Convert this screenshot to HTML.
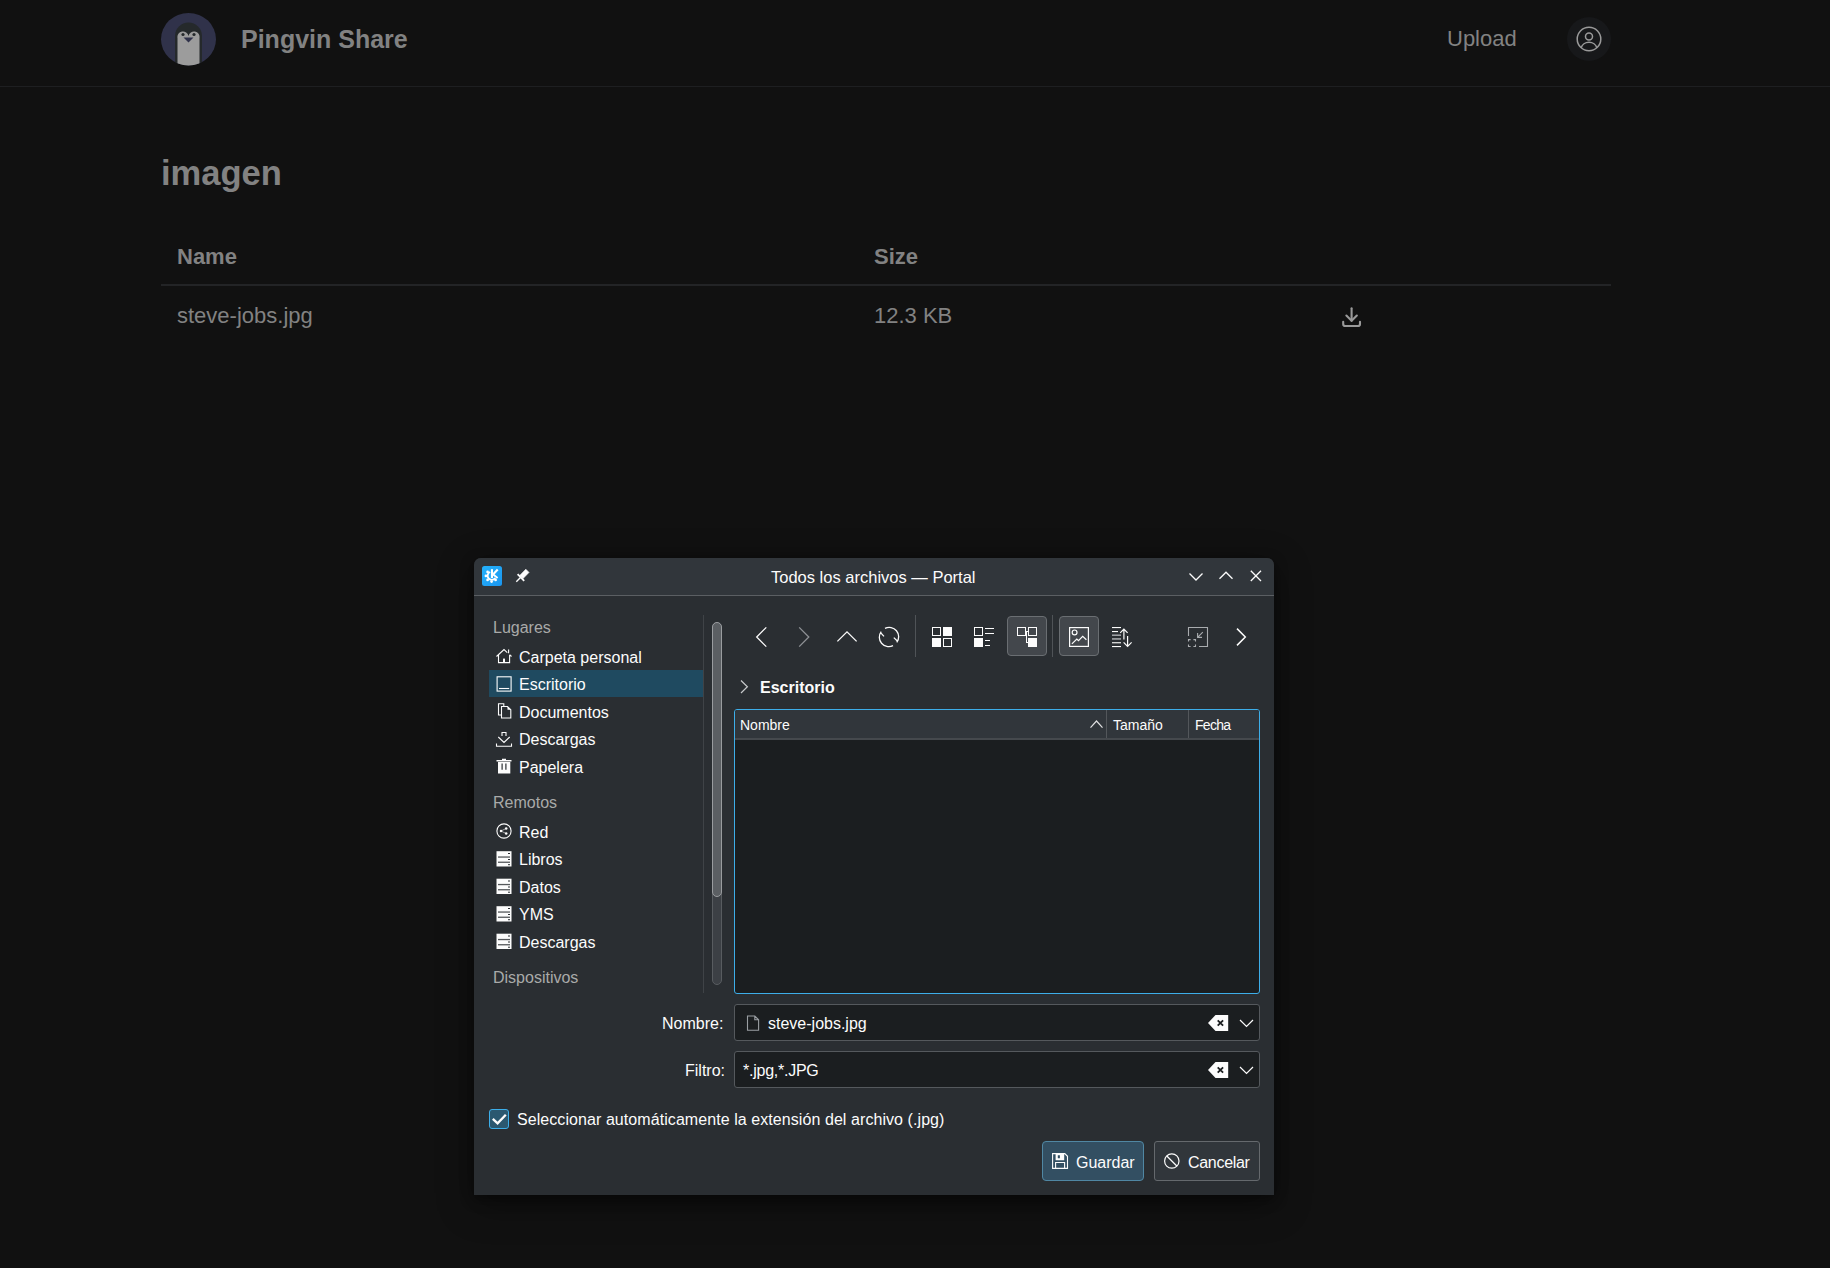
<!DOCTYPE html>
<html><head><meta charset="utf-8">
<style>
*{margin:0;padding:0;box-sizing:border-box}
html,body{width:1830px;height:1268px;overflow:hidden;background:#111111;font-family:"Liberation Sans",sans-serif}
.a{position:absolute;white-space:nowrap}
#hdrline{position:absolute;left:0;top:86px;width:1830px;height:1px;background:#1e1f21}
.web{color:#828282}
/* dialog */
#dlg{position:absolute;left:474px;top:558px;width:800px;height:637px;background:#2a2e32;border-radius:6px 6px 0 0;overflow:hidden;color:#fcfcfc}
#title{position:absolute;left:0;top:0;width:800px;height:37px;background:#31363b;border-bottom:1px solid #4f5459}
.d{position:absolute;white-space:nowrap;font-size:16px;color:#fcfcfc}
.sec{color:#a9aaa9}
svg{position:absolute;overflow:visible}
</style></head>
<body>
<!-- header -->
<svg style="left:161px;top:12px" width="56" height="56" viewBox="0 0 56 56">
  <ellipse cx="27.5" cy="27.2" rx="27.5" ry="26.3" fill="#30324a"/>
  <clipPath id="cc"><ellipse cx="27.5" cy="27.2" rx="27.5" ry="26.3"/></clipPath>
  <g clip-path="url(#cc)">
    <path d="M14 60 V24 A13.5 13.5 0 0 1 41 24 V60 Z" fill="#25292b"/>
    <path d="M16.5 60 V26 A5 5 0 0 1 27.5 24 A5 5 0 0 1 38.5 26 V60 Z" fill="#9c9c9c"/>
    <circle cx="22" cy="22.5" r="1.6" fill="#25292b"/>
    <circle cx="33" cy="22.5" r="1.6" fill="#25292b"/>
    <path d="M22.5 25.5 H32.5 L27.5 30.5 Z" fill="#30324a"/>
  </g>
</svg>
<div class="a web" style="left:241px;top:23px;font-size:25px;font-weight:bold;line-height:32px">Pingvin Share</div>
<div class="a web" style="left:1447px;top:25px;font-size:22px;line-height:28px">Upload</div>
<div class="a" style="left:1567px;top:17px;width:44px;height:44px;border-radius:50%;background:#17181a"></div>
<svg style="left:1569px;top:19px" width="40" height="40" viewBox="0 0 40 40" fill="none" stroke="#9a9a9a" stroke-width="1.5">
  <circle cx="20" cy="20" r="11.8"/>
  <circle cx="20" cy="17.6" r="3.5"/>
  <path d="M12.2 28.8 A8 7.2 0 0 1 27.8 28.8"/>
</svg>
<div id="hdrline"></div>
<div class="a web" style="left:161px;top:153px;font-size:34.5px;font-weight:bold;line-height:40px">imagen</div>
<div class="a web" style="left:177px;top:244px;font-size:22px;font-weight:bold;line-height:26px">Name</div>
<div class="a web" style="left:874px;top:244px;font-size:22px;font-weight:bold;line-height:26px">Size</div>
<div class="a" style="left:161px;top:284px;width:1450px;height:2px;background:#232426"></div>
<div class="a web" style="left:177px;top:303px;font-size:22px;line-height:26px">steve-jobs.jpg</div>
<div class="a web" style="left:874px;top:303px;font-size:22px;line-height:26px">12.3 KB</div>
<svg style="left:1339px;top:304px" width="25.2" height="25.2" viewBox="0 0 24 24" fill="none" stroke="#9a9a9a" stroke-width="2" stroke-linecap="round" stroke-linejoin="round">
  <path d="M4 17v2a2 2 0 0 0 2 2h12a2 2 0 0 0 2 -2v-2"/><path d="M7 11l5 5l5 -5"/><path d="M12 4l0 12"/>
</svg>

<!-- dialog -->
<div class="a" style="left:474px;top:558px;width:800px;height:637px;background:#2a2e32;border-radius:7px 7px 0 0;overflow:hidden;box-shadow:0 4px 14px rgba(0,0,0,0.45),0 10px 36px rgba(0,0,0,0.35)">
  <div class="a" style="left:0;top:0;width:800px;height:37px;background:#31363b"></div>
  <div class="a" style="left:0;top:37px;width:800px;height:1px;background:#5b5f63"></div>
</div>
<!-- title -->
<div class="d" style="left:771px;top:569px;font-size:16.5px;line-height:16.5px">Todos los archivos — Portal</div>
<!-- places -->
<div class="a" style="left:489px;top:670px;width:214px;height:27px;background:#1f4a60"></div>
<div class="d sec" style="left:493px;top:620px;line-height:16px">Lugares</div>
<div class="d" style="left:519px;top:650px;line-height:16px">Carpeta personal</div>
<div class="d" style="left:519px;top:677px;line-height:16px">Escritorio</div>
<div class="d" style="left:519px;top:705px;line-height:16px">Documentos</div>
<div class="d" style="left:519px;top:732px;line-height:16px">Descargas</div>
<div class="d" style="left:519px;top:760px;line-height:16px">Papelera</div>
<div class="d sec" style="left:493px;top:795px;line-height:16px">Remotos</div>
<div class="d" style="left:519px;top:825px;line-height:16px">Red</div>
<div class="d" style="left:519px;top:852px;line-height:16px">Libros</div>
<div class="d" style="left:519px;top:880px;line-height:16px">Datos</div>
<div class="d" style="left:519px;top:907px;line-height:16px">YMS</div>
<div class="d" style="left:519px;top:935px;line-height:16px">Descargas</div>
<div class="d sec" style="left:493px;top:970px;line-height:16px">Dispositivos</div>
<div class="a" style="left:703px;top:615px;width:1px;height:378px;background:#3f4347"></div>
<!-- scrollbar -->
<div class="a" style="left:711.5px;top:622px;width:10px;height:363px;border-radius:5px;background:#3c4045;border:1px solid #585c60"></div>
<div class="a" style="left:711.5px;top:622px;width:10px;height:275px;border-radius:5px;background:#5b5f63;border:1px solid #999c9f"></div>
<!-- toolbar buttons -->
<div class="a" style="left:1007px;top:616px;width:40px;height:40px;border-radius:4px;background:#43474c;border:1px solid #6a6e72"></div>
<div class="a" style="left:1059px;top:616px;width:40px;height:40px;border-radius:4px;background:#43474c;border:1px solid #6a6e72"></div>
<div class="a" style="left:915px;top:615px;width:1px;height:42px;background:#4f5357"></div>
<div class="a" style="left:1052px;top:615px;width:1px;height:42px;background:#4f5357"></div>
<!-- breadcrumb -->
<div class="d" style="left:760px;top:680px;line-height:16px;font-weight:bold">Escritorio</div>
<!-- view -->
<div class="a" style="left:734px;top:709px;width:526px;height:285px;border:1px solid #3daee9;border-radius:3px;background:#1b1e20;overflow:hidden">
  <div class="a" style="left:0;top:0;width:524px;height:30px;background:#31363b;border-bottom:2px solid #45494d"></div>
  <div class="a" style="left:371px;top:0;width:1px;height:28px;background:#53575b"></div>
  <div class="a" style="left:453px;top:0;width:1px;height:28px;background:#53575b"></div>
</div>
<div class="d" style="left:740px;top:718px;font-size:14px;line-height:14px">Nombre</div>
<div class="d" style="left:1113px;top:718px;font-size:14px;line-height:14px">Tamaño</div>
<div class="d" style="left:1195px;top:718px;font-size:14px;line-height:14px;letter-spacing:-0.7px">Fecha</div>
<!-- fields -->
<div class="d" style="left:662px;top:1016px;line-height:16px">Nombre:</div>
<div class="a" style="left:734px;top:1004px;width:526px;height:37px;border:1px solid #55595d;border-radius:3px;background:#1b1e20"></div>
<div class="d" style="left:768px;top:1016px;line-height:16px">steve-jobs.jpg</div>
<div class="d" style="left:685px;top:1063px;line-height:16px">Filtro:</div>
<div class="a" style="left:734px;top:1051px;width:526px;height:37px;border:1px solid #55595d;border-radius:3px;background:#1b1e20"></div>
<div class="d" style="left:743px;top:1063px;line-height:16px;letter-spacing:-0.25px">*.jpg,*.JPG</div>
<!-- checkbox -->
<div class="a" style="left:489px;top:1109px;width:20px;height:20px;border:1px solid #3daee9;border-radius:3px;background:#2b5870"></div>
<div class="d" style="left:517px;top:1112px;line-height:16px;letter-spacing:0.07px">Seleccionar automáticamente la extensión del archivo (.jpg)</div>
<!-- buttons -->
<div class="a" style="left:1042px;top:1141px;width:102px;height:40px;border:1px solid #5087a3;border-radius:4px;background:#334f62"></div>
<div class="d" style="left:1076px;top:1155px;line-height:16px">Guardar</div>
<div class="a" style="left:1154px;top:1141px;width:106px;height:40px;border:1px solid #65696d;border-radius:3px;background:#31363b"></div>
<div class="d" style="left:1188px;top:1155px;line-height:16px;letter-spacing:-0.3px">Cancelar</div>
<!-- icons -->
<svg style="left:0;top:0" width="1830" height="1268" viewBox="0 0 1830 1268">
 <defs>
  <linearGradient id="kg" x1="0" y1="0" x2="1" y2="1"><stop offset="0" stop-color="#24b2fb"/><stop offset="1" stop-color="#1b96f0"/></linearGradient>
 </defs>
 <!-- KDE logo -->
 <rect x="482" y="566" width="20" height="20" rx="2.5" fill="url(#kg)"/>
 <path d="M490.2 572 A4.1 4.1 0 1 0 495.2 578" stroke="#fff" stroke-width="1.8" fill="none"/>
 <g fill="#fff">
  <circle cx="485.9" cy="575.9" r="1.35"/><circle cx="487.6" cy="571.9" r="1.35"/><circle cx="487.6" cy="579.9" r="1.35"/>
  <circle cx="491.6" cy="581.6" r="1.35"/><circle cx="495.6" cy="579.9" r="1.35"/>
  <rect x="490.9" y="569.2" width="2.1" height="8.9"/>
 </g>
 <g stroke="#fff" fill="none">
  <line x1="492.8" y1="574.8" x2="497.7" y2="569.5" stroke-width="2.1"/>
  <line x1="493.2" y1="574.4" x2="497.6" y2="577.9" stroke-width="1.9"/>
 </g>
 <!-- pin -->
 <g fill="#fcfcfc" stroke="#fcfcfc">
  <line x1="516.3" y1="581.8" x2="521" y2="577.1" stroke-width="1.4"/>
  <line x1="517.6" y1="574.2" x2="524.2" y2="580.8" stroke-width="1.8"/>
  <path d="M519.8 575.4 L525.8 569.2 L529 572.4 L523 578.6 Z" stroke-width="0.6"/>
 </g>
 <!-- title buttons -->
 <g fill="none" stroke="#fcfcfc" stroke-width="1.3">
  <path d="M1189.5 573.5 L1196 580 L1202.5 573.5"/>
  <path d="M1219.5 578.7 L1226 572.2 L1232.5 578.7"/>
  <path d="M1250.8 570.8 L1261 581 M1261 570.8 L1250.8 581"/>
 </g>
 <!-- toolbar -->
 <g fill="none" stroke="#fcfcfc" stroke-width="1.3">
  <path d="M766.3 627.4 L756.7 637 L766.3 646.6"/>
  <path d="M837.4 641.4 L847 631.8 L856.6 641.4"/>
  <path d="M885 628.4 A9.4 9.4 0 0 1 896.8 642.4 M893.8 637.6 L897.6 641.2"/>
  <path d="M893 645.6 A9.4 9.4 0 0 1 881.2 631.6 M880.8 632.9 L884 636.4"/>
 </g>
 <path d="M799.2 627.4 L808.8 637 L799.2 646.6" fill="none" stroke="#8e9195" stroke-width="1.3"/>
 <!-- icons view -->
 <g fill="#fcfcfc">
  <path d="M932 627 h9 v9 h-9 Z M933 628 v7 h7 v-7 Z" fill-rule="evenodd"/>
  <rect x="943" y="627" width="9" height="9"/>
  <rect x="932" y="638" width="9" height="9"/>
  <path d="M943 638 h9 v9 h-9 Z M944 639 v7 h7 v-7 Z" fill-rule="evenodd"/>
 <!-- compact -->
  <path d="M974 627 h9 v9 h-9 Z M975 628 v7 h7 v-7 Z" fill-rule="evenodd"/>
  <rect x="974" y="638" width="9" height="9"/>
  <rect x="985" y="628" width="9" height="1"/><rect x="985" y="633" width="9" height="1"/>
  <rect x="985" y="640" width="5" height="1"/><rect x="985" y="645" width="5" height="1"/>
 <!-- tree -->
  <path d="M1017 627 h9 v9 h-9 Z M1018 628 v7 h7 v-7 Z" fill-rule="evenodd"/>
  <path d="M1028 627 h9 v9 h-9 Z M1029 628 v7 h7 v-7 Z" fill-rule="evenodd"/>
  <rect x="1028" y="638" width="9" height="9"/>
  <rect x="1026" y="631" width="2" height="1"/>
  <rect x="1026" y="631" width="1" height="12"/>
  <rect x="1026" y="642" width="2" height="1"/>
 </g>
 <!-- preview -->
 <g fill="none" stroke="#fcfcfc" stroke-width="1.2">
  <rect x="1069.6" y="627.6" width="18.8" height="18.8"/>
  <circle cx="1074.6" cy="632.4" r="2.4"/>
  <path d="M1071.9 643.9 L1076.8 639 L1078.5 640.7 L1082.7 636.3 L1086.4 639.8"/>
 </g>
 <!-- sort -->
 <g fill="#fcfcfc">
  <rect x="1112" y="627" width="9" height="1.1"/>
  <rect x="1112" y="631" width="6" height="1.1"/>
  <rect x="1112" y="634.6" width="9" height="1.1" fill="#d0d2d4"/>
  <rect x="1112" y="638.4" width="9" height="1.1" fill="#d8dadc"/>
  <rect x="1112" y="642.2" width="9" height="1.1"/>
  <rect x="1112" y="646" width="9" height="1.1"/>
 </g>
 <g fill="none" stroke="#fcfcfc" stroke-width="1.2">
  <path d="M1123.9 629.2 V639.5 M1120.2 632.8 L1123.9 629 L1127.6 632.8"/>
  <path d="M1127.6 636 V646.4 M1123.6 642.4 L1127.6 646.4 L1131.6 642.4"/>
 </g>
 <!-- zoom fit (dim) -->
 <g fill="none" stroke="#a9acaf" stroke-width="1.1">
  <path d="M1188.5 636 V627.5 H1207.5 V646.5 H1199"/>
  <path d="M1188.5 641.6 V639.6 H1190.6 M1193.4 639.6 H1195.5 V641.6 M1188.5 644.4 V646.5 H1190.6 M1193.4 646.5 H1195.5 V644.4"/>
  <path d="M1202.8 632.2 L1197.6 637.4 M1197.6 633 V637.4 H1202"/>
 </g>
 <path d="M1237 628.6 L1245.3 637 L1237 645.4" fill="none" stroke="#fcfcfc" stroke-width="1.5"/>
 <!-- breadcrumb > -->
 <path d="M741 680.5 L747.4 686.8 L741 693" fill="none" stroke="#c8cacc" stroke-width="1.2"/>
 <!-- sort caret -->
 <path d="M1090.5 727.6 L1096.5 721 L1102.5 727.6" fill="none" stroke="#e0e1e2" stroke-width="1.2"/>
 <!-- places icons -->
 <g fill="none" stroke="#fcfcfc" stroke-width="1.1">
  <path d="M496.5 656.5 L504 649.5 L507.3 652.6 M509.6 654.6 L511.5 656.5 M498.5 655 V662.6 H509.6 V655 M508.6 649.6 V653.2"/>
  <rect x="497.1" y="676.8" width="14" height="14.3"/>
  <path d="M499 688.5 H509.2"/>
  <path d="M501.5 718 V706.5 H507.5 L510.8 709.8 V718 Z M501.5 715 H498.5 V703.8 H503.8 V706.5"/>
  <path d="M496.5 743.5 V746.3 H511.5 V743.5 M498.3 737 L504 742.5 L509.7 737 M502 736 V732.5 H506 V736"/>
  <circle cx="504" cy="831" r="7.1"/>
  <path d="M501 831 L506 828.5 M501 831 L506 833.5" stroke-width="0.6"/>
 </g>
 <path d="M510.8 709.8 H507.5 V706.5 Z" fill="#fcfcfc"/>
 <rect x="503" y="658.6" width="2" height="4.4" fill="#fcfcfc"/>
 <g fill="#fcfcfc">
  <circle cx="501" cy="831" r="1.25"/><circle cx="506.2" cy="828.4" r="1.25"/><circle cx="506.2" cy="833.6" r="1.25"/>
  <path d="M496.5 760 H511.5 V761.5 H496.5 Z M502 758.8 H506 V760 H502 Z"/>
  <path d="M498 762 H510.3 V773.6 H498 Z M501.5 763.5 V769.8 H502.7 V763.5 Z M505.3 763.5 V769.8 H506.5 V763.5 Z" fill-rule="evenodd"/>
 </g>
 <g transform="translate(0,0.0)">
  <rect x="496.5" y="851.2" width="15" height="15.3" fill="#fcfcfc"/>
  <rect x="498" y="856.4" width="12" height="1.3" fill="#55585b"/>
  <rect x="498" y="861.6" width="12" height="1.3" fill="#55585b"/>
  <rect x="508" y="853" width="2" height="1" fill="#2a2e32"/>
  <rect x="508" y="859" width="2" height="1" fill="#2a2e32"/>
  <rect x="508" y="864.2" width="2" height="1" fill="#2a2e32"/>
 </g>
 <g transform="translate(0,27.5)">
  <rect x="496.5" y="851.2" width="15" height="15.3" fill="#fcfcfc"/>
  <rect x="498" y="856.4" width="12" height="1.3" fill="#55585b"/>
  <rect x="498" y="861.6" width="12" height="1.3" fill="#55585b"/>
  <rect x="508" y="853" width="2" height="1" fill="#2a2e32"/>
  <rect x="508" y="859" width="2" height="1" fill="#2a2e32"/>
  <rect x="508" y="864.2" width="2" height="1" fill="#2a2e32"/>
 </g>
 <g transform="translate(0,55.0)">
  <rect x="496.5" y="851.2" width="15" height="15.3" fill="#fcfcfc"/>
  <rect x="498" y="856.4" width="12" height="1.3" fill="#55585b"/>
  <rect x="498" y="861.6" width="12" height="1.3" fill="#55585b"/>
  <rect x="508" y="853" width="2" height="1" fill="#2a2e32"/>
  <rect x="508" y="859" width="2" height="1" fill="#2a2e32"/>
  <rect x="508" y="864.2" width="2" height="1" fill="#2a2e32"/>
 </g>
 <g transform="translate(0,82.5)">
  <rect x="496.5" y="851.2" width="15" height="15.3" fill="#fcfcfc"/>
  <rect x="498" y="856.4" width="12" height="1.3" fill="#55585b"/>
  <rect x="498" y="861.6" width="12" height="1.3" fill="#55585b"/>
  <rect x="508" y="853" width="2" height="1" fill="#2a2e32"/>
  <rect x="508" y="859" width="2" height="1" fill="#2a2e32"/>
  <rect x="508" y="864.2" width="2" height="1" fill="#2a2e32"/>
 </g>
 <!-- field icons -->
 <path d="M747.5 1030.2 V1016 H754.8 L758.6 1019.8 V1030.2 Z M754.8 1016 V1019.8 H758.6" fill="none" stroke="#9a9ea2" stroke-width="1.1"/>
 <g>
  <path d="M1208 1023 L1215.5 1015 H1228.2 V1031 H1215.5 Z" fill="#fcfcfc"/>
  <path d="M1217.7 1020.3 L1223.1 1025.7 M1223.1 1020.3 L1217.7 1025.7" stroke="#1b1e20" stroke-width="1.8"/>
  <path d="M1208 1070 L1215.5 1062 H1228.2 V1078 H1215.5 Z" fill="#fcfcfc"/>
  <path d="M1217.7 1067.3 L1223.1 1072.7 M1223.1 1067.3 L1217.7 1072.7" stroke="#1b1e20" stroke-width="1.8"/>
 </g>
 <g fill="none" stroke="#fcfcfc" stroke-width="1.2">
  <path d="M1240 1020 L1246.5 1026.5 L1253 1020"/>
  <path d="M1240 1067 L1246.5 1073.5 L1253 1067"/>
 </g>
 <!-- checkmark -->
 <path d="M492.8 1118.8 L497.6 1123.4 L505.8 1114.8" fill="none" stroke="#fcfcfc" stroke-width="2.3"/>
 <!-- save icon -->
 <g fill="none" stroke="#fcfcfc" stroke-width="1.1">
  <path d="M1052.6 1168.4 V1153.6 H1064.8 L1067.5 1156.3 V1168.4 Z"/>
  <path d="M1055.6 1168 V1162.5 H1064.6 V1168"/>
 </g>
 <path d="M1055.6 1154 H1064.2 V1160.2 H1055.6 Z M1057.8 1155.2 V1158.2 H1059.9 V1155.2 Z" fill="#fcfcfc" fill-rule="evenodd"/>
 <!-- cancel icon -->
 <g fill="none" stroke="#fcfcfc" stroke-width="1.2">
  <circle cx="1171.8" cy="1161" r="7.2"/>
  <path d="M1166.8 1156 L1176.8 1166"/>
 </g>
</svg>
</body></html>
